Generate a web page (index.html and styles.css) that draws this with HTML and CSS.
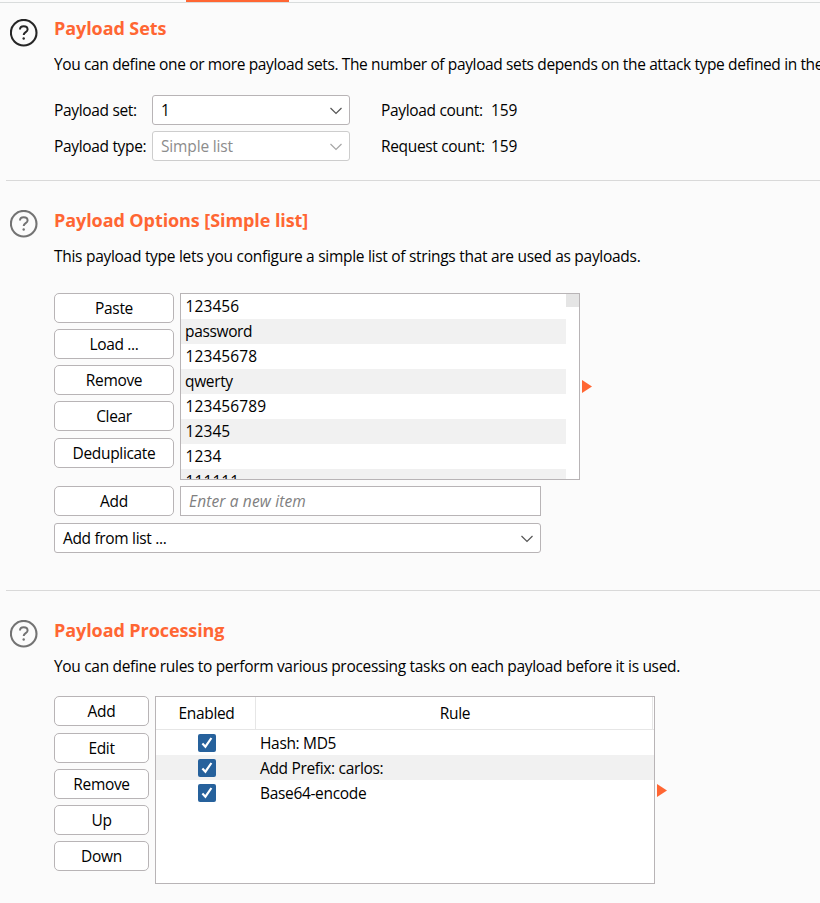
FILE: index.html
```html
<!DOCTYPE html>
<html lang="en">
<head>
<meta charset="utf-8">
<title>Payloads</title>
<link rel="stylesheet" href="styles.css">
</head>
<body>
<svg class="defs" aria-hidden="true">
  <symbol id="help" viewBox="0 0 28 28">
    <circle cx="13.700" cy="13.700" r="12.800" fill="none" stroke="currentColor" stroke-width="2.100"/>
    <path d="M10 10.500C10 8.400 11.500 7.200 13.700 7.200c2.300 0 3.900 1.300 3.900 3.300 0 2.800-3.900 2.600-3.900 5.500" fill="none" stroke="currentColor" stroke-width="2"/>
    <circle cx="13.700" cy="19.500" r="1.200" fill="currentColor"/>
  </symbol>
  <symbol id="chevron" viewBox="0 0 12 8">
    <path d="M.5 1l5.500 5.500L11.500 1" fill="none" stroke="currentColor" stroke-width="1.200"/>
  </symbol>
  <symbol id="check" viewBox="0 0 18 18">
    <rect width="18" height="18" rx="2" fill="#26619c"/>
    <path d="M4.400 9.500l3 3.200 6-8.700" fill="none" stroke="#fff" stroke-width="2.200"/>
  </symbol>
</svg>
<div class="tabline"><span class="tab-active"></span></div>

<section class="section sets">
  <svg class="help dark"><use href="#help"/></svg>
  <div class="content">
    <h2>Payload Sets</h2>
    <p class="desc d1">You can define one or more payload sets. The number of payload sets depends on the attack type defined in the</p>
    <div class="set-grid">
      <span>Payload set:</span>
      <div class="combo"><span>1</span><svg><use href="#chevron"/></svg></div>
      <span class="count">Payload count:</span><span class="num">159</span>
      <span>Payload type:</span>
      <div class="combo disabled"><span>Simple list</span><svg><use href="#chevron"/></svg></div>
      <span class="count">Request count:</span><span class="num">159</span>
    </div>
  </div>
</section>

<section class="section options">
  <svg class="help"><use href="#help"/></svg>
  <div class="content">
    <h2>Payload Options [Simple list]</h2>
    <p class="desc d2">This payload type lets you configure a simple list of strings that are used as payloads.</p>
    <div class="list-row">
      <div class="buttons wide">
        <button>Paste</button><button>Load ...</button><button>Remove</button><button>Clear</button><button class="nudge">Deduplicate</button>
      </div>
      <div class="list">
        <ul>
          <li>123456</li><li class="word">password</li><li>12345678</li><li class="word">qwerty</li><li>123456789</li><li>12345</li><li>1234</li><li>111111</li>
        </ul>
        <div class="scroll"><div class="thumb"></div></div>
      </div>
      <svg class="arrow" viewBox="0 0 10 13"><path d="M0 0l10 6.500L0 13z"/></svg>
    </div>
    <div class="add-row"><button>Add</button><div class="field">Enter a new item</div></div>
    <div class="combo from-list"><span>Add from list ...</span><svg><use href="#chevron"/></svg></div>
  </div>
</section>

<section class="section processing">
  <svg class="help"><use href="#help"/></svg>
  <div class="content">
    <h2>Payload Processing</h2>
    <p class="desc d3">You can define rules to perform various processing tasks on each payload before it is used.</p>
    <div class="list-row">
      <div class="buttons narrow">
        <button>Add</button><button class="nudge">Edit</button><button>Remove</button><button>Up</button><button>Down</button>
      </div>
      <div class="table">
        <div class="thead"><span>Enabled</span><span>Rule</span></div>
        <div class="tr"><svg><use href="#check"/></svg><span>Hash: MD5</span></div>
        <div class="tr"><svg><use href="#check"/></svg><span>Add Prefix: carlos:</span></div>
        <div class="tr"><svg><use href="#check"/></svg><span>Base64-encode</span></div>
      </div>
      <svg class="arrow" viewBox="0 0 10 13"><path d="M0 0l10 6.500L0 13z"/></svg>
    </div>
  </div>
</section>
</body>
</html>
```
FILE: styles.css
```css
* { box-sizing: border-box; }
body {
  margin: 0;
  height: 903px;
  overflow: hidden;
  background: #fbfbfb;
  color: #000;
  font: 15.5px/20px "Open Sans", "Noto Sans", sans-serif;
  letter-spacing: -0.33px;
}
.defs { display: none; }
.tabline { height: 3px; border-bottom: 1px solid #d9dcdc; padding-left: 186px; }
.tab-active { display: block; width: 103px; height: 2px; background: #ff6633; }

.section { display: flex; margin-left: 6px; padding-left: 4px; border-bottom: 1px solid #d9d9d9; }
.sets { height: 178px; padding-top: 14px; }
.options { height: 410px; padding-top: 28px; }
.processing { height: 312px; padding-top: 28px; border-bottom: 0; }
.help { width: 28px; height: 28px; margin: 1px 16px 0 0; flex: none; color: #737373; }
.help.dark { color: #262626; }
.sets .help { margin-top: 2px; }
.content { flex: 1; min-width: 0; }
h2 { margin: 0; font-size: 18px; line-height: 22px; font-weight: 700; color: #ff6633; letter-spacing: -0.08px; white-space: nowrap; }
.desc { margin: 15px 0 0; height: 20px; white-space: nowrap; }
.d1 { letter-spacing: -0.37px; overflow: hidden; }
.d2 { letter-spacing: -0.285px; }
.d3 { letter-spacing: -0.32px; }
.set-grid {
  display: grid;
  grid-template-columns: 98px 198px 141px auto;
  grid-auto-rows: 30px;
  row-gap: 6px;
  align-items: center;
  margin-top: 21px;
}
.count { padding-left: 31px; }
.num { letter-spacing: -0.1px; }
.combo {
  display: flex; align-items: center; justify-content: space-between;
  height: 30px; padding: 0 8px; white-space: nowrap;
  background: #fff; border: 1px solid #b8b4b6; border-radius: 3px;
}
.combo svg { width: 12px; height: 8px; color: #555; margin-top: 1px; }
.sets .combo svg { margin-right: -1px; }
.combo.disabled { color: #8c8c8c; border-color: #cdcdcd; letter-spacing: -0.15px; }
.combo.disabled svg { color: #a6a6a6; }

.list-row { display: flex; align-items: flex-start; }
.options .list-row { margin-top: 27px; height: 187px; }
.processing .list-row { margin-top: 20px; height: 188px; }
.buttons { display: flex; flex-direction: column; gap: 6px; }
button {
  height: 30px; padding: 0; font: inherit; letter-spacing: inherit; color: #000; line-height: 28px;
  background: #fff; border: 1px solid #b8b4b6; border-radius: 5px;
}
.nudge { margin-top: 1px; }
.wide { width: 120px; margin-right: 6px; }
.narrow { width: 95px; margin-right: 6px; }
.list { display: flex; width: 400px; height: 187px; background: #fff; border: 1px solid #b8b4b6; overflow: hidden; }
ul { flex: 1; list-style: none; margin: 0; padding: 0; }
li { height: 25px; line-height: 25px; padding-left: 4.5px; letter-spacing: 0.1px; }
li:nth-child(even) { background: #f1f1f1; }
.word { padding-left: 4px; letter-spacing: -0.35px; }
.scroll { width: 13px; }
.thumb { height: 13px; background: #e5e5e5; }
.arrow { width: 10px; height: 13px; align-self: center; margin-left: 2px; fill: #ff6633; }
.add-row { display: flex; gap: 6px; margin-top: 6px; }
.add-row button { width: 120px; }
.field { width: 361px; height: 30px; padding-left: 8px; line-height: 28px; font-style: italic; letter-spacing: 0.14px; color: #808080; background: #fff; border: 1px solid #b8b4b6; }
.from-list { width: 487px; margin-top: 7px; }
.from-list svg { margin-right: -1px; }

.table { width: 500px; height: 188px; background: #fff; border: 1px solid #b8b4b6; }
.thead { display: grid; grid-template-columns: 100px 1fr; height: 33px; line-height: 32px; text-align: center; border-bottom: 1px solid #e6e6e6; }
.thead span { padding-left: 2px; border-right: 1px solid #e6e6e6; }
.thead span:last-child { margin-right: 1px; }
.tr { display: flex; align-items: center; height: 25px; line-height: 18px; }
.tr:nth-child(odd) { background: #f1f1f1; }
.tr svg { width: 18px; height: 18px; margin: 1px 44px 0 42px; }
```
